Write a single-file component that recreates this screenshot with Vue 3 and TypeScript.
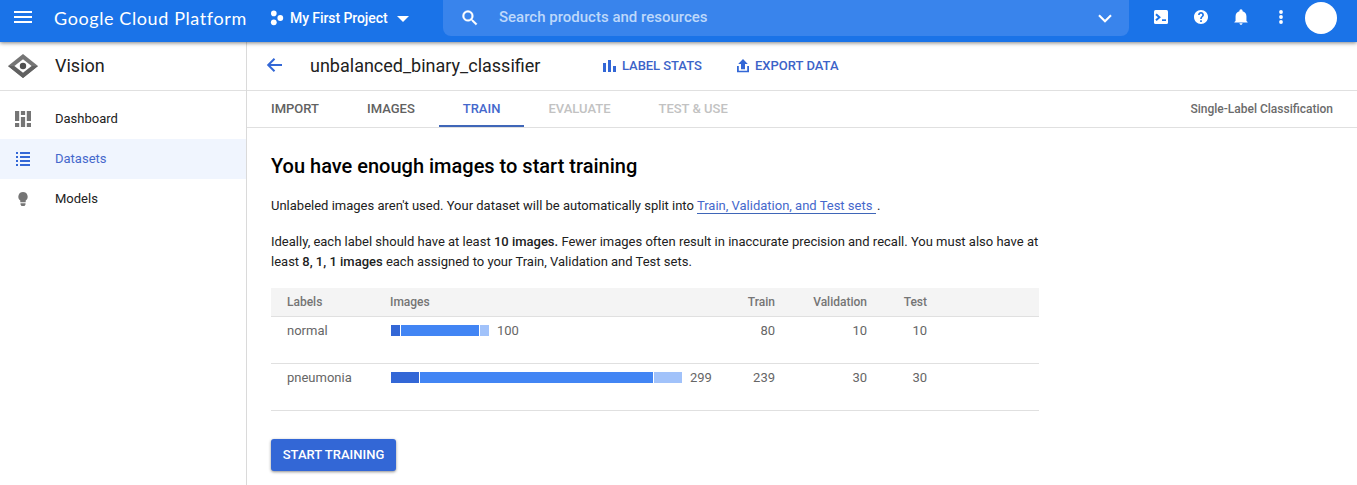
<script setup lang="ts">
interface NavItem { label: string; icon: 'dashboard' | 'list' | 'bulb'; active?: boolean }
interface Tab { label: string; state: 'normal' | 'active' | 'disabled' }
interface LabelRow { name: string; total: number; train: number; validation: number; test: number; segments: number[] }

const navItems: NavItem[] = [
  { label: 'Dashboard', icon: 'dashboard' },
  { label: 'Datasets', icon: 'list', active: true },
  { label: 'Models', icon: 'bulb' },
]
const tabs: Tab[] = [
  { label: 'IMPORT', state: 'normal' },
  { label: 'IMAGES', state: 'normal' },
  { label: 'TRAIN', state: 'active' },
  { label: 'EVALUATE', state: 'disabled' },
  { label: 'TEST & USE', state: 'disabled' },
]
const rows: LabelRow[] = [
  { name: 'normal', total: 100, train: 80, validation: 10, test: 10, segments: [9, 78, 9] },
  { name: 'pneumonia', total: 299, train: 239, validation: 30, test: 30, segments: [28, 233, 28] },
]
</script>

<template>
  <div class="page">
    <header class="topbar">
      <svg class="menu" width="18" height="14" viewBox="0 0 18 14" fill="#fff"><path d="M0 1h18v2H0zM0 6h18v2H0zM0 11h18v2H0z" /></svg>
      <div class="brand">Google Cloud Platform</div>
      <div class="project">
        <svg width="14" height="16" viewBox="0 0 14 16" fill="#fff"><circle cx="3.8" cy="3.4" r="2.8" /><circle cx="3.8" cy="12.3" r="2.9" /><circle cx="10.3" cy="8" r="2.9" /></svg>
        <span>My First Project</span>
        <svg class="caret" width="12" height="6" viewBox="0 0 12 6" fill="#fff"><path d="M0 0h12L6 6z" /></svg>
      </div>
      <div class="search">
        <svg width="20" height="20" viewBox="0 0 24 24" fill="#fff"><path d="M15.5 14h-.79l-.28-.27A6.471 6.471 0 0 0 16 9.5 6.5 6.5 0 1 0 9.500 16c1.61 0 3.090-.59 4.230-1.570l.27.28v.79l5 4.990L20.490 19l-4.990-5zm-6 0C7.010 14 5 11.990 5 9.500S7.010 5 9.500 5 14 7.010 14 9.500 11.990 14 9.500 14z" stroke="#fff" stroke-width=".5" /></svg>
        <span class="placeholder">Search products and resources</span>
        <svg width="14" height="9" viewBox="0 0 14 9" fill="none" stroke="#fff" stroke-width="2.1"><path d="M1 1.200l6 6 6-6" /></svg>
      </div>
      <div class="tools">
        <svg width="14" height="14" viewBox="0 0 14 14"><rect width="14" height="14" rx="1.500" fill="#fff" /><path d="M2 4.200L5.400 7.300 2 10.300" fill="none" stroke="#1a73e8" stroke-width="2" /><path d="M8 9.300h4v1.700H8z" fill="#1a73e8" /></svg>
        <svg width="14" height="14" viewBox="2 2 20 20" fill="#fff"><path d="M12 2C6.480 2 2 6.480 2 12s4.480 10 10 10 10-4.480 10-10S17.520 2 12 2zm1.200 17h-2.400v-2.400h2.400V19zm2.100-7.750l-.9.920C13.600 12.900 13.200 13.500 13.200 15h-2.400v-.5c0-1.100.45-2.100 1.170-2.830l1.240-1.260c.37-.36.59-.86.59-1.410 0-1.100-.7-1.800-1.800-1.800s-1.800.7-1.800 1.800H7.800c0-2.400 1.900-4.200 4.200-4.200s4.200 1.800 4.200 4.200c0 .88-.36 1.680-.9 2.250z" /></svg>
        <svg width="14" height="16" viewBox="3 2 18 20" fill="#fff"><path d="M12 22c1.100 0 2-.9 2-2h-4c0 1.100.9 2 2 2zm7-5v-6c0-3.070-1.900-5.640-5-6.320V4c0-.83-.67-2-2-2s-2 1.170-2 2v.680C6.900 5.360 5 7.920 5 11v6l-1.500 1.500V19h17v-.5L19 17z" /></svg>
        <svg width="14" height="14" viewBox="0 0 14 14" fill="#fff"><circle cx="7" cy="2" r="1.900" /><circle cx="7" cy="7" r="1.900" /><circle cx="7" cy="12" r="1.900" /></svg>
      </div>
      <div class="avatar"></div>
    </header>

    <div class="body">
      <aside class="sidebar">
        <div class="product">
          <svg width="30" height="24" viewBox="0 0 30 24"><path d="M15 0l15 12-15 12L0 12z" fill="#757575" /><path d="M0 12h30L15 24z" fill="#616161" /><path d="M15 5.300L23.600 12 15 18.700 6.400 12z" fill="#fff" /><circle cx="15" cy="12" r="3.200" fill="#505050" /></svg>
          <span>Vision</span>
        </div>
        <nav>
          <div v-for="item in navItems" :key="item.label" class="nav-item" :class="{ active: item.active }">
            <svg width="16" height="16" viewBox="0 0 16 16" fill="currentColor">
              <path v-if="item.icon === 'dashboard'" d="M0 0h4.200v10H0zM5.900 0h4.200v4H5.900zM11.800 0H16v10h-4.200zM0 12h4.200v4H0zM5.900 6h4.200v10H5.900zM11.800 12H16v4h-4.200z" />
              <path v-else-if="item.icon === 'list'" d="M1 1h2v2H1zM5 1h10v2H5zM1 5h2v2H1zM5 5h10v2H5zM1 9h2v2H1zM5 9h10v2H5zM1 13h2v2H1zM5 13h10v2H5z" />
              <path v-else d="M8 1a4.700 4.700 0 0 0-2.700 8.500V11.200h5.400V9.500A4.700 4.700 0 0 0 8 1zM5.500 12.300h5v1.200L9.500 15h-3l-1-1.500z" />
            </svg>
            <span>{{ item.label }}</span>
          </div>
        </nav>
      </aside>

      <main>
        <div class="titlebar">
          <svg class="back" width="16" height="16" viewBox="0 0 16 16" fill="none" stroke="#3367d6" stroke-width="2"><path d="M16 7H2M8.500 .7L2.200 7l6.300 6.300" /></svg>
          <h1>unbalanced_binary_classifier</h1>
          <div class="action stats">
            <svg width="14" height="14" viewBox="0 0 14 14" fill="#3367d6"><path d="M0 4h3v9H0zM5 1h3v12H5zM10 7h3v6h-3z" /></svg>
            <span>LABEL STATS</span>
          </div>
          <div class="action export">
            <svg width="12" height="14" viewBox="0 0 12 14" fill="#3367d6"><path d="M6 0l4.800 5H8v5.300H4V5H1.200zM0 7h1.800v4.700h8.400V7H12v6.300H0z" /></svg>
            <span>EXPORT DATA</span>
          </div>
        </div>
        <div class="tabs">
          <div v-for="tab in tabs" :key="tab.label" class="tab" :class="tab.state">{{ tab.label }}</div>
          <div class="kind">Single-Label Classification</div>
        </div>
        <section class="content">
          <h2>You have enough images to start training</h2>
          <p class="intro">Unlabeled images aren't used. Your dataset will be automatically split into <a>Train, Validation, and Test sets&nbsp;</a>&#8202;.</p>
          <p class="detail">Ideally, each label should have at least <b>10 images.</b> Fewer images often result in inaccurate precision and recall. You must also have at<br>least <b>8, 1, 1 images</b> each assigned to your Train, Validation and Test sets.</p>
          <div class="table">
            <div class="row head">
              <span>Labels</span><span>Images</span><span class="num">Train</span><span class="num">Validation</span><span class="num">Test</span>
            </div>
            <div v-for="row in rows" :key="row.name" class="row">
              <span>{{ row.name }}</span>
              <span class="bar">
                <i v-for="(width, index) in row.segments" :key="index" :class="'seg' + index" :style="{ width: width + 'px' }"></i>
                <span class="total">{{ row.total }}</span>
              </span>
              <span class="num">{{ row.train }}</span>
              <span class="num">{{ row.validation }}</span>
              <span class="num">{{ row.test }}</span>
            </div>
          </div>
          <button>START TRAINING</button>
        </section>
      </main>
    </div>
  </div>
</template>

<style>
body { margin: 0; overflow: hidden; background: #fff; }
</style>

<style scoped>
* { box-sizing: border-box; }
.page { width: 1357px; height: 485px; overflow: hidden; display: flex; flex-direction: column; font: 13px/20px Roboto, "Liberation Sans", sans-serif; color: #212121; background: #fff; }
svg { display: block; flex: none; }
span { white-space: nowrap; }
.topbar { position: relative; z-index: 1; height: 42px; flex: none; display: flex; align-items: flex-start; background: #1a73e8; box-shadow: 0 1px 4px rgba(0, 0, 0, .5); color: #fff; }
.menu { margin: 10px 22px 0 14px; }
.brand { width: 216px; padding-top: 7px; font: 18px/22px Lato, sans-serif; letter-spacing: .6px; white-space: nowrap; }
.project { width: 173px; display: flex; align-items: center; height: 36px; font-size: 14px; font-weight: 500; letter-spacing: -.08px; }
.project span { width: 107px; margin-left: 6px; }
.caret { margin-top: 1px; }
.search { width: 686px; height: 36px; display: flex; align-items: center; padding: 0 17px; background: #3984ec; border-radius: 0 0 8px 8px; }
.placeholder { flex: 1; margin: -3px 0 0 19px; font-size: 15px; font-weight: 500; color: #bdd8fb; }
.tools { display: flex; align-items: center; height: 34px; gap: 26px; margin-left: 25px; }
.avatar { width: 32px; height: 32px; margin: 2px 0 0 17px; border-radius: 50%; background: #fff; }
.body { display: flex; flex: 1; }
.sidebar { width: 247px; border-right: 1px solid #dadada; }
.product { height: 49px; display: flex; align-items: center; padding-left: 8px; gap: 17px; border-bottom: 1px solid #e0e0e0; font-size: 18px; }
nav { padding-top: 8px; }
.nav-item { height: 40px; display: flex; align-items: center; padding-left: 15px; gap: 24px; color: #757575; }
.nav-item span { color: #212121; }
.nav-item.active { background: #f0f5fe; color: #3367d6; }
.nav-item.active span { color: #4568cc; }
main { flex: 1; }
.titlebar { height: 49px; display: flex; align-items: center; border-bottom: 1px solid #e0e0e0; padding-left: 19px; }
h1 { width: 293px; margin: 0 0 0 28px; font-size: 18px; font-weight: 400; line-height: 24px; }
.action { display: flex; align-items: center; font-weight: 500; color: #3c63c8; }
.stats { width: 134px; gap: 5px; letter-spacing: -.05px; }
.export { gap: 6px; }
.tabs { height: 37px; display: flex; border-bottom: 1px solid #e0e0e0; }
.tab { padding: 0 24px; line-height: 35px; font-weight: 500; color: #616161; white-space: nowrap; border-bottom: 2px solid transparent; }
.tab.active { color: #4568cc; border-color: #3f66b8; }
.tab.disabled { color: #c2c2c2; }
.kind { margin: 0 24px 0 auto; line-height: 36px; font-size: 12px; font-weight: 500; color: #6b6b6b; }
.content { padding: 25px 0 0 24px; }
h2 { margin: 0; font-size: 20px; line-height: 26px; font-weight: 500; color: #000; }
p { margin: 0; white-space: nowrap; }
.intro { margin-top: 17px; }
.detail { margin-top: 16px; }
b { font-weight: 500; }
a { color: #4568cc; border-bottom: 1px solid #3f66b8; }
.table { width: 768px; margin-top: 16px; color: #666; }
.row { display: grid; grid-template-columns: 103px 315px 70px 92px 60px; height: 47px; padding: 4px 0 0 16px; border-bottom: 1px solid #e0e0e0; align-items: start; }
.row.head { height: 29px; background: #f4f4f4; font-size: 12px; font-weight: 500; color: #757575; }
.num { text-align: right; }
.bar { display: flex; align-items: flex-start; gap: 1px; padding-left: 1px; }
.bar i { flex: none; height: 11px; margin-top: 4px; }
.seg0 { background: #3367d6; }
.seg1 { background: #4285f4; }
.seg2 { background: #a1c2fa; }
.total { margin-left: 7px; }
button { display: block; width: 125px; height: 32px; margin-top: 28px; padding: 0; border: 0; border-radius: 3px; background: #3367d6; color: #fff; font: 500 13px/32px Roboto, sans-serif; box-shadow: 0 1px 3px rgba(0, 0, 0, .45); }
</style>
